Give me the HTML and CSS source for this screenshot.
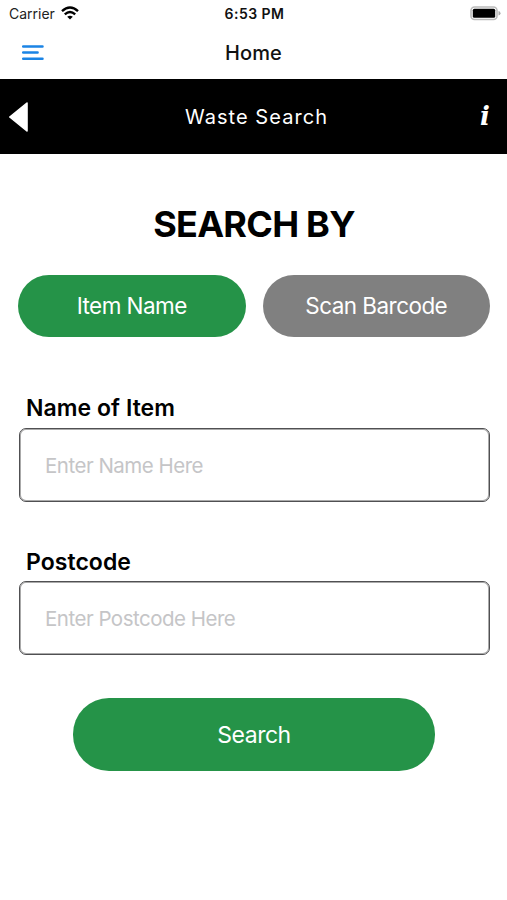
FILE: index.html
```html
<!DOCTYPE html>
<html lang="en">
<head>
<meta charset="utf-8">
<title>Waste Search</title>
<link rel="stylesheet" href="styles.css">
</head>
<body>
<div class="status">
  <div class="carrier"><span class="carrier-name">Carrier</span>
    <svg class="wifi" viewBox="0 0 18 14" width="18" height="14"><g fill="none" stroke="#000" stroke-width="2.4"><path d="M1 5.200Q9-2.200 17 5.200"/><path d="M3.800 8.300Q9 3.600 14.200 8.300"/></g><path d="M6.200 10.800Q9 8.600 11.800 10.800L9 13.600Z"/></svg>
  </div>
  <span class="time">6:53 PM</span>
  <svg class="battery" viewBox="0 0 31 15" width="31" height="15"><rect x="1" y="1" width="26" height="12.500" rx="3.500" fill="#fff" stroke="#bbb" stroke-width="1.600"/><rect x="2.800" y="2.800" width="22.400" height="9" rx="1.500"/><path d="M28.500 5Q30.500 5.500 30.500 7.200T28.500 9.500Z" fill="#aaa"/></svg>
</div>
<header class="nav">
  <svg class="menu" viewBox="0 0 24 18" width="24" height="18"><path d="M2.200 2.500H21.500M2.200 8.600H16.600M2.200 14.700H21.500" fill="none" stroke="#1b84e5" stroke-width="2.500" stroke-linecap="round"/></svg>
  <span class="nav-title">Home</span>
</header>
<div class="bar">
  <svg class="back" viewBox="0 0 20 32" width="20" height="32"><path d="M.8 16L18 2V30Z" fill="#fff" stroke="#fff" stroke-width="1.600" stroke-linejoin="round"/></svg>
  <span class="bar-title">Waste Search</span>
  <span class="info">i</span>
</div>
<main>
  <h1>SEARCH BY</h1>
  <div class="tabs"><button class="pill">Item Name</button><button class="pill gray">Scan Barcode</button></div>
  <label for="name">Name of Item</label>
  <input id="name" placeholder="Enter Name Here">
  <label class="second" for="post">Postcode</label>
  <input id="post" placeholder="Enter Postcode Here">
  <button class="pill search">Search</button>
</main>
</body>
</html>
```
FILE: styles.css
```css
* { box-sizing: border-box; }
body { margin: 0; height: 900px; background: #fff; color: #000; font-family: Inter, sans-serif; overflow: hidden; }
.status { height: 27px; display: grid; grid-template-columns: 1fr auto 1fr; align-items: center; padding: 0 6px 0 9px; }
.carrier { display: flex; align-items: center; gap: 6px; font-size: 14px; color: #222; }
.wifi { margin-top: -2px; }
.time { font-size: 14px; font-weight: 600; letter-spacing: .45px; color: #111; margin-left: -1px; }
.battery { justify-self: end; }
.nav { height: 52px; display: grid; grid-template-columns: 1fr auto 1fr; align-items: center; padding-left: 21px; }
.nav-title { font-size: 20px; font-weight: 500; margin-left: -21px; color: #111; letter-spacing: .1px; }
.bar { height: 75px; background: #000; color: #fff; display: grid; grid-template-columns: 1fr auto 1fr; align-items: center; padding: 0 17px 0 9px; }
.bar-title { font-size: 20px; letter-spacing: 1.05px; margin: 0 -7px 0 7px; }
.info { justify-self: end; font: italic bold 26px/30px "DejaVu Serif", serif; margin: -2px 0 0; }
main { padding: 0 17px 0 18px; display: flex; flex-direction: column; }
h1 { margin: 46px 0 0; height: 46px; line-height: 48px; text-align: center; font-size: 36px; font-weight: 700; letter-spacing: -.75px; }
.tabs { margin-top: 29px; display: grid; grid-template-columns: 1fr 1fr; gap: 17px; }
.pill { border: 0; padding: 0 0 1px; height: 62px; border-radius: 36px; background: #259348; color: #fff; font-family: inherit; font-size: 22.5px; letter-spacing: -.55px; }
.gray { background: #808080; }
label { height: 30px; line-height: 30px; margin: 56px 0 5px 8px; font-size: 23px; font-weight: 600; letter-spacing: .05px; }
.second { margin-top: 44px; line-height: 32px; }
input { height: 74px; margin: 0 0 0 1px; border: 1px solid #505052; box-shadow: inset 0 0 0 1px #aaa; border-radius: 7px; padding: 0 25px; font-family: inherit; font-size: 20.5px; letter-spacing: -.5px; background: #fff; }
input::placeholder { color: #c5c5c7; opacity: 1; }
.search { height: 73px; width: 362px; margin: 43px 0 0 55px; padding: 1px 0 0; font-size: 23px; letter-spacing: -.5px; }
```
